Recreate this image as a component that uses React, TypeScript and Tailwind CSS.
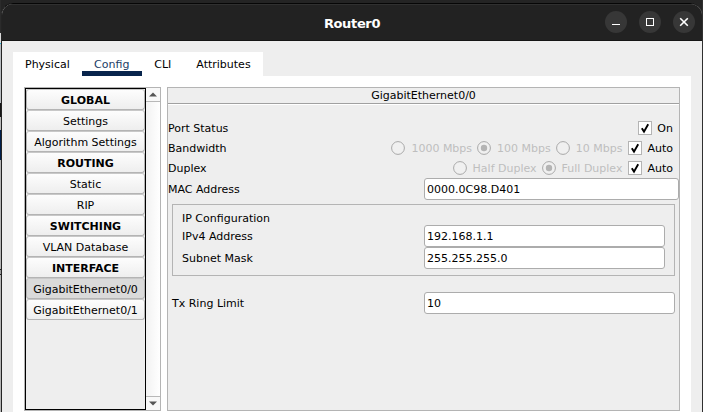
import type { ReactNode } from "react";

type NavItem = { label: string; heading?: boolean; active?: boolean };

const NAV: NavItem[] = [
  { label: "GLOBAL", heading: true },
  { label: "Settings" },
  { label: "Algorithm Settings" },
  { label: "ROUTING", heading: true },
  { label: "Static" },
  { label: "RIP" },
  { label: "SWITCHING", heading: true },
  { label: "VLAN Database" },
  { label: "INTERFACE", heading: true },
  { label: "GigabitEthernet0/0", active: true },
  { label: "GigabitEthernet0/1" },
];

function NavButton({ label, heading, active }: NavItem) {
  const fill = active ? "bg-[#dadada]" : "bg-linear-to-b from-[#fdfdfd] to-[#eeeeee]";
  return (
    <button
      className={`block h-[21px] w-full shrink-0 whitespace-nowrap rounded-[3px] border border-[#b4b4b4] border-t-[#c8c8c8] text-center leading-[21px] ${fill} ${heading ? "font-bold" : ""}`}
    >
      {label}
    </button>
  );
}

function WindowButton({ children }: { children: ReactNode }) {
  return (
    <button className="flex size-[22px] items-center justify-center rounded-full bg-[#373737]">
      <svg width="22" height="22" viewBox="0 0 22 22" fill="none" stroke="#fff">
        {children}
      </svg>
    </button>
  );
}

function Text({ children }: { children: ReactNode }) {
  return <span className="block pt-px leading-[17px]">{children}</span>;
}

function Radio({ label, checked }: { label: string; checked?: boolean }) {
  return (
    <label className="flex items-center text-[#bebebe]">
      <svg width="14" height="14" viewBox="0 0 14 14" className="mr-[6px]">
        <circle cx="7" cy="7" r="6.4" fill="#f0f0f0" stroke="#a8a8a8" />
        {checked && <circle cx="7" cy="7" r="3.2" fill="#b4b4b4" />}
      </svg>
      <Text>{label}</Text>
    </label>
  );
}

function Check({ label }: { label: string }) {
  return (
    <label className="ml-px flex items-center">
      <svg width="14" height="14" viewBox="0 0 14 14" className="mr-[5px]">
        <rect x=".5" y=".5" width="13" height="13" fill="#fff" stroke="#b4b4b4" />
        <path d="M3.8 7.2 6 10.6 10.2 3.2" fill="none" stroke="#000" strokeWidth="1.9" />
      </svg>
      <Text>{label}</Text>
    </label>
  );
}

function Field({ value, className }: { value: string; className: string }) {
  return (
    <div className={`h-[22px] shrink-0 rounded-[3px] border border-[#acacac] bg-white pl-[2px] leading-[22px] ${className}`}>
      {value}
    </div>
  );
}

export default function App() {
  return (
    <div className="flex h-[412px] w-[703px] overflow-hidden bg-[#242424] font-['DejaVu_Sans',sans-serif] text-[11px] text-black">
      <div className="flex w-px flex-col">
        <div className="h-[33px] bg-[#2b2b2b]" />
        <div className="h-[10px] bg-[#d8d8d8]" />
        <div className="h-px bg-[#24b6dd]" />
        <div className="h-[59px] bg-[#b8bcc0]" />
        <div className="h-[14px] bg-[#171717]" />
        <div className="h-[13px] bg-[#b9b9b9]" />
        <div className="h-[30px] bg-[#001f4c]" />
        <div className="h-[109px] bg-[#b5b5b5]" />
        <div className="h-[6px] border-y border-[#222] bg-[#999]" />
        <div className="flex-1 bg-[#b5b5b5]" />
      </div>
      <div className="mt-[3px] flex w-[701px] flex-col overflow-hidden rounded-t-[12px] border-t border-l border-t-[#060606] border-l-[#242424] bg-[#eee]">
        <header className="flex h-[37px] shrink-0 items-start border-t border-b border-t-[#303030] border-b-[#151515] bg-[#222] pt-[6px]">
          <div className="w-[603px] pl-[97px] text-center text-[13px] leading-[25px] font-bold tracking-[-0.35px] text-white">Router0</div>
          <div className="flex gap-3">
            <WindowButton>
              <path d="M7 13.5h8" />
            </WindowButton>
            <WindowButton>
              <rect x="7.5" y="7.5" width="7" height="7" />
            </WindowButton>
            <WindowButton>
              <path d="m7.2 7.2 7.6 7.6m0-7.6-7.6 7.6" strokeWidth="1.6" />
            </WindowButton>
          </div>
        </header>
        <div className="flex flex-1 flex-col pt-[11px] pr-[11px] pl-[11px]">
          <nav className="flex h-6 w-[250px] shrink-0 bg-white leading-[26px]">
            <span className="ml-3">Physical</span>
            <span className="ml-[12px] h-6 w-[60px] border-b-5 border-[#08244c] text-center text-[#1b3c66]">Config</span>
            <span className="ml-[12.5px]">CLI</span>
            <span className="ml-[25px]">Attributes</span>
          </nav>
          <main className="flex flex-1 bg-white pt-[11px] pl-[11px]">
            <aside className="flex h-[324px] w-[137px] border border-[#b4b4b4] bg-[#eee]">
              <div className="w-[121px] shrink-0 border border-black bg-[#eee]">
                {NAV.map((item) => (
                  <NavButton key={item.label} {...item} />
                ))}
              </div>
              <div className="flex w-[14px] flex-col bg-linear-to-r from-[#f2f2f2] to-white">
                <div className="flex h-[14px] items-center justify-center border-b border-[#b8b8b8] bg-[#f8f8f8]">
                  <svg width="8" height="5" viewBox="0 0 8 5"><path d="M0 4.5 4 .5l4 4z" fill="#555" /></svg>
                </div>
                <div className="flex-1" />
                <div className="flex h-[14px] items-center justify-center border-t border-[#b8b8b8] bg-[#f8f8f8]">
                  <svg width="8" height="5" viewBox="0 0 8 5"><path d="M0 .5h8l-4 4z" fill="#555" /></svg>
                </div>
              </div>
            </aside>
            <section className="ml-[6px] flex h-[324px] w-[513px] flex-col border border-[#b4b4b4] bg-[#eee]">
              <h2 className="h-4 shrink-0 border-b border-[#a0a0a0] text-center leading-[15px] shadow-[0_1px_0_#fff]">GigabitEthernet0/0</h2>
              <div className="mt-[14px] flex h-5 items-center justify-between pr-[6px]">
                <Text>Port Status</Text>
                <Check label="On" />
              </div>
              <div className="flex h-5 items-center justify-between pr-[6px]">
                <Text>Bandwidth</Text>
                <div className="flex gap-[5px]">
                  <Radio label="1000 Mbps" />
                  <Radio label="100 Mbps" checked />
                  <Radio label="10 Mbps" />
                  <Check label="Auto" />
                </div>
              </div>
              <div className="flex h-5 items-center justify-between pr-[6px]">
                <Text>Duplex</Text>
                <div className="flex gap-[5px]">
                  <Radio label="Half Duplex" />
                  <Radio label="Full Duplex" checked />
                  <Check label="Auto" />
                </div>
              </div>
              <div className="flex h-[22px] items-center justify-between">
                <Text>MAC Address</Text>
                <Field value="0000.0C98.D401" className="w-[255px]" />
              </div>
              <div className="mt-[4px] ml-[4px] h-[72px] w-[503px] shrink-0 border border-[#b4b4b4] pt-[6px] pl-[9px]">
                <div className="h-[14px] leading-[16px]">IP Configuration</div>
                <div className="flex h-[22px] items-center justify-between pr-[9px]">
                  <Text>IPv4 Address</Text>
                  <Field value="192.168.1.1" className="w-[241px]" />
                </div>
                <div className="flex h-[22px] items-center justify-between pr-[9px]">
                  <Text>Subnet Mask</Text>
                  <Field value="255.255.255.0" className="w-[241px]" />
                </div>
              </div>
              <div className="mt-[16px] ml-[4px] flex h-[22px] w-[503px] items-center justify-between">
                <Text>Tx Ring Limit</Text>
                <Field value="10" className="w-[251px]" />
              </div>
            </section>
          </main>
        </div>
      </div>
      <div className="w-px bg-[#303030]" />
    </div>
  );
}
